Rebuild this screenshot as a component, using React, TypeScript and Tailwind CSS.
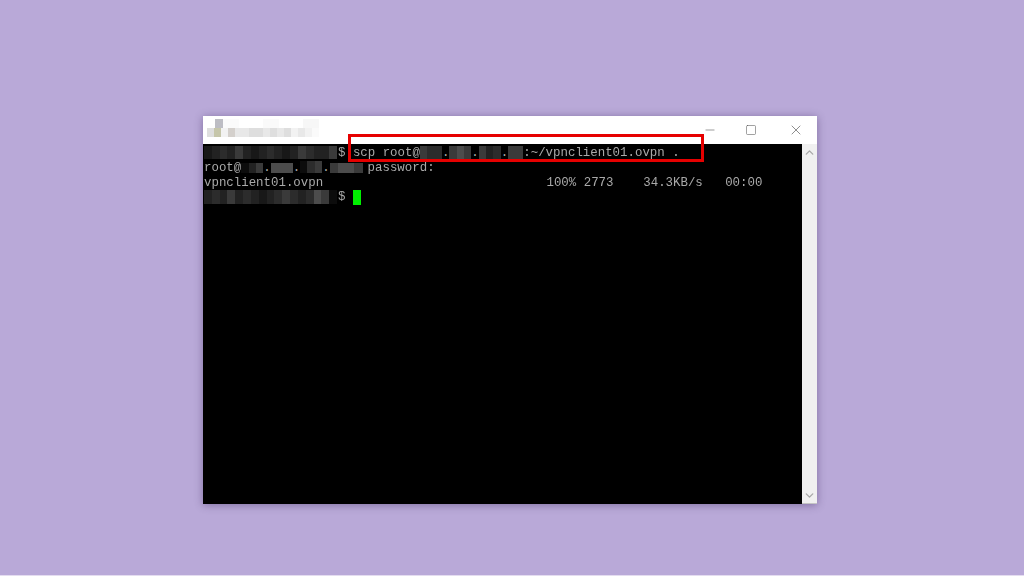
import { Minus, Square, X, ChevronUp, ChevronDown } from 'lucide-react'

const shades: Record<string, string> = {
  a: 'bg-[#0c0c0c]',
  b: 'bg-[#181818]',
  c: 'bg-[#222222]',
  d: 'bg-[#2c2c2c]',
  e: 'bg-[#3a3a3a]',
  f: 'bg-[#4c4c4c]',
}

const lightShades: Record<string, string> = {
  a: 'bg-[#fafafa]',
  b: 'bg-[#f2f2f2]',
  c: 'bg-[#e8e8e8]',
  d: 'bg-[#dedede]',
  e: 'bg-[#d4d0cc]',
  f: 'bg-[#c6c6aa]',
}

// one pixelated (censored) stretch of text
function Mosaic({ cells, className }: { cells: string; className: string }) {
  return (
    <span className={`inline-flex align-top blur-[0.7px] ${className}`}>
      {cells.split('').map((c, i) => (
        <span key={i} className={`flex-1 h-full ${shades[c]}`} />
      ))}
    </span>
  )
}

function Line({ children, className = 'h-[15px]' }: { children: React.ReactNode; className?: string }) {
  return <div className={`whitespace-pre ${className}`}>{children}</div>
}

export default function App() {
  return (
    <div className="w-[1024px] h-[576px] overflow-hidden flex flex-col">
      <div className="h-[575px] bg-[#b9a9d8] pl-[203px] pt-[116px]">
        <div className="relative w-[614px] h-[388px] flex flex-col bg-white shadow-[0_1px_8px_rgba(60,40,90,0.45)]">
          <div className="h-[28px] flex items-start shrink-0">
            <div className="w-[125px] h-[24px] mt-[3px] ml-[4px] flex flex-col blur-[0.7px]">
              <div className="flex h-[9px] pl-[8px]">
                <span className="w-[8px] h-full bg-[#bdbdc4]" />
                <span className="w-[16px] h-full bg-[#fbfbfb]" />
                <span className="ml-[24px] w-[16px] h-full bg-[#fafafa]" />
                <span className="ml-[24px] w-[16px] h-full bg-[#f7f7f7]" />
              </div>
              <div className="flex w-[112px] h-[9px]">
                {'dfbeccddcdcdbcba'.split('').map((c, i) => (
                  <span key={i} className={`flex-1 h-full ${lightShades[c]}`} />
                ))}
              </div>
            </div>
            <div className="ml-auto flex items-center text-[#555555] mt-[6px]">
              <Minus size={14} strokeWidth={1} className="mr-[28px]" />
              <Square size={12} strokeWidth={1.1} className="mr-[31px]" />
              <X size={16} strokeWidth={1} className="mr-[13px]" />
            </div>
          </div>
          <div className="flex-1 flex min-h-0">
            <div className="flex-1 bg-black pt-[2px] pl-px font-['Liberation_Mono',monospace] text-[12.417px] leading-[15px] text-[#a9a9a9]">
              <Line>
                <Mosaic cells="bcdcecbcdcbcedcce" className="w-[133px] h-[13px] mr-px" />
                <span className="blur-[0.4px]">{'$ scp root@'}</span>
                <Mosaic cells="edd" className="w-[22px] h-[13px]" />.
                <Mosaic cells="efe" className="w-[22px] h-[13px]" />.
                <Mosaic cells="ecd" className="w-[22px] h-[13px]" />.
                <Mosaic cells="ee" className="w-[15px] h-[13px]" />
                <span className="blur-[0.4px]">{':~/vpnclient01.ovpn .'}</span>
              </Line>
              <Line>
                <span className="blur-[0.4px]">{'root@'}</span>
                <Mosaic cells="ace" className="w-[22px] h-[10px] mt-[2px]" />.
                <Mosaic cells="fff" className="w-[22px] h-[10px] mt-[2px]" />.
                <Mosaic cells="ade" className="w-[22px] h-[12px]" />.
                <Mosaic cells="effe" className="w-[33px] h-[10px] mt-[2px]" />
                <span className="ml-[5px] blur-[0.4px]">password:</span>
              </Line>
              <Line className="h-[14px] blur-[0.4px]">{'vpnclient01.ovpn                              100% 2773    34.3KB/s   00:00'}</Line>
              <Line>
                <Mosaic cells="cdcecdcbcdedcdfea" className="w-[133px] h-[14px] mr-px" />
                <span className="blur-[0.4px]">{'$ '}</span>
                <span className="inline-block align-top w-[8px] h-[15px] bg-[#00f000]" />
              </Line>
            </div>
            <div className="w-[15px] shrink-0 bg-[#f0f0f0] flex flex-col justify-between items-center pt-[2px] pb-[1px] text-[#a8a8a8] border-b border-[#c4c4c4]">
              <ChevronUp size={13} strokeWidth={2.5} />
              <ChevronDown size={13} strokeWidth={2.5} />
            </div>
          </div>
          {/* red highlight drawn over the command */}
          <div className="absolute left-[145px] top-[18px] w-[356px] h-[28px] border-[3px] border-[#e60000]" />
        </div>
      </div>
      <div className="h-px bg-[#e4dcf0]" />
    </div>
  )
}
